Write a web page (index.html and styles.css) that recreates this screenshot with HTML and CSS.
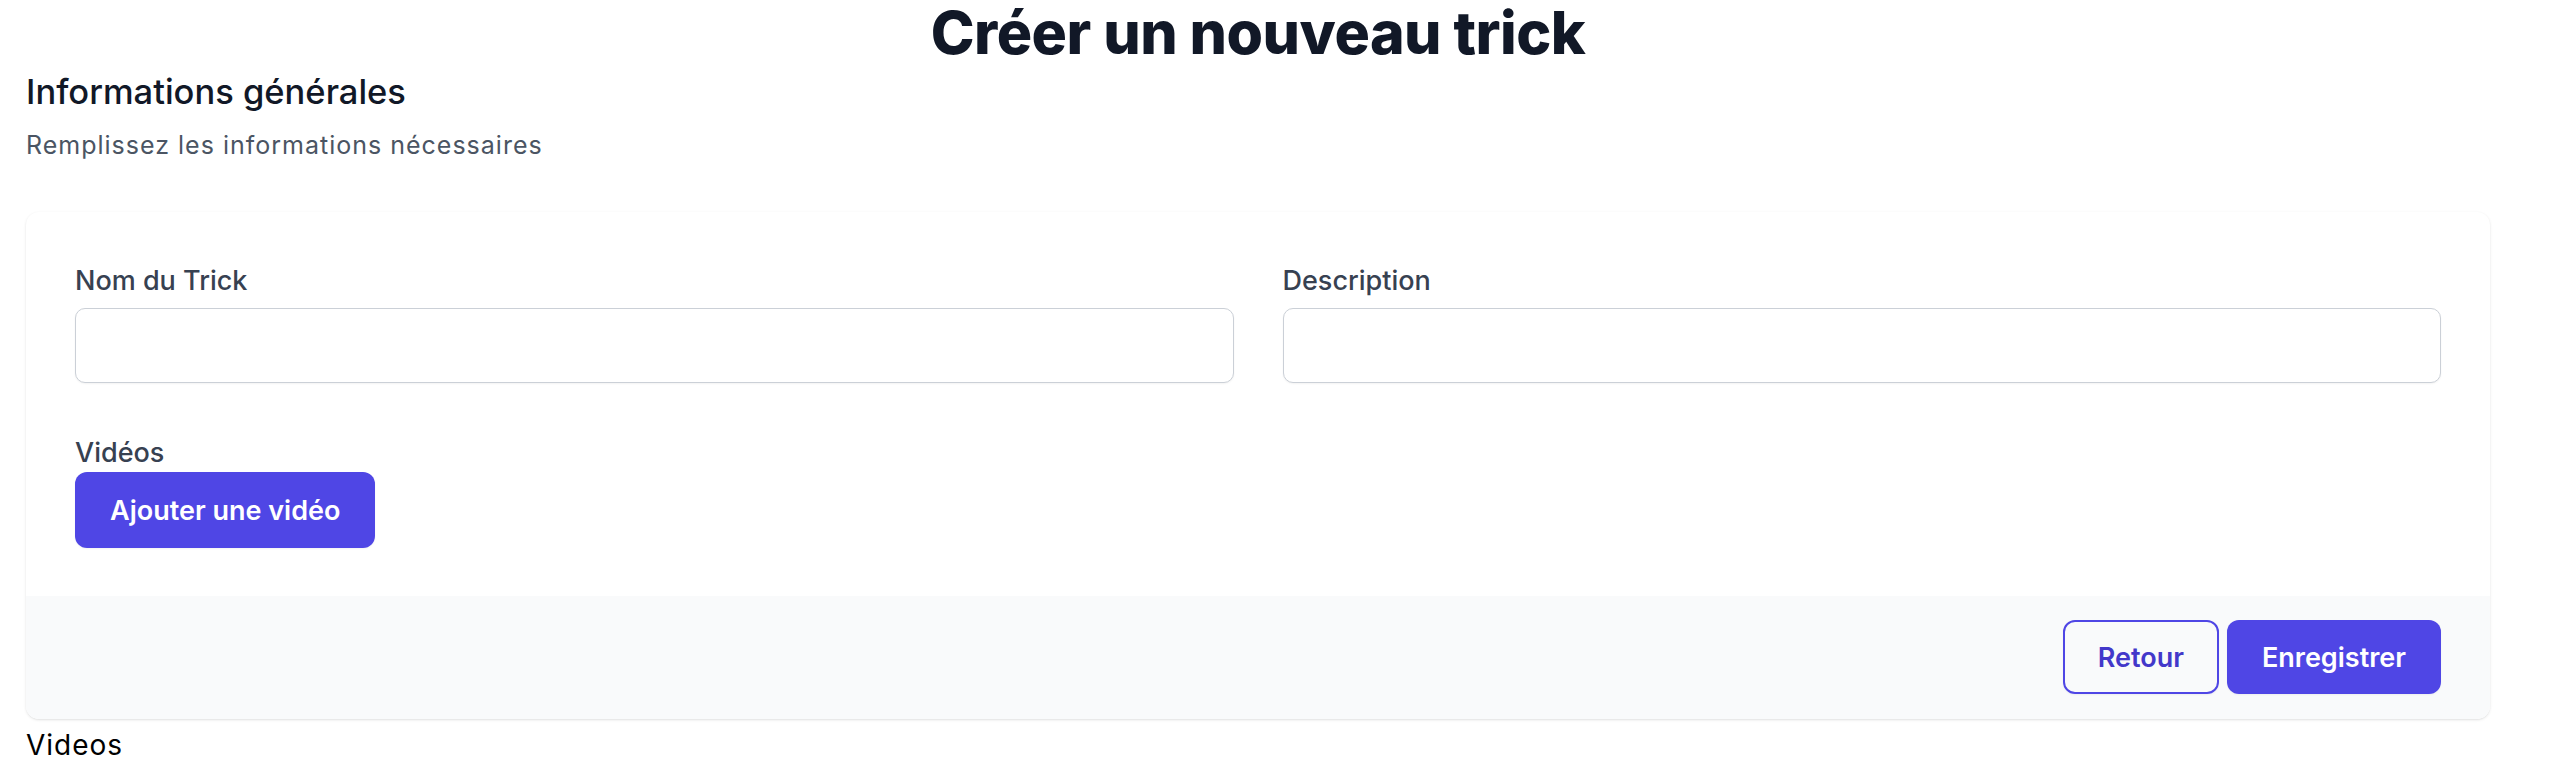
FILE: index.html
```html
<!DOCTYPE html>
<html lang="fr">
<head>
<meta charset="utf-8">
<title>Créer un nouveau trick</title>
<link rel="stylesheet" href="styles.css">
</head>
<body>
<div class="page">
  <h1 class="title">Créer un nouveau trick</h1>
  <h2 class="section-title">Informations générales</h2>
  <p class="section-sub">Remplissez les informations nécessaires</p>
  <form class="card">
    <div class="card-body">
      <div class="grid">
        <div class="field">
          <label class="label" for="name">Nom du Trick</label>
          <input class="input" id="name" type="text">
        </div>
        <div class="field">
          <label class="label" for="desc">Description</label>
          <input class="input" id="desc" type="text">
        </div>
      </div>
      <div class="videos">
        <label class="label">Vidéos</label>
        <button type="button" class="btn btn-primary btn-add">Ajouter une vidéo</button>
      </div>
    </div>
    <div class="card-footer">
      <button type="button" class="btn btn-outline">Retour</button>
      <button type="submit" class="btn btn-primary">Enregistrer</button>
    </div>
  </form>
  <div class="videos-text">Videos</div>
</div>
</body>
</html>
```

FILE: styles.css
```css
html, body {
  margin: 0;
  padding: 0;
  background: #ffffff;
}

body {
  font-family: Inter, "Noto Sans", "Liberation Sans", sans-serif;
}

.page {
  margin-left: 26px;
  width: 2464px;
}

.title {
  margin: 0;
  text-align: center;
  font-size: 59px;
  font-weight: 800;
  line-height: 66px;
  color: #111827;
  letter-spacing: -0.5px;
}

.section-title {
  margin: 3px 0 0;
  font-size: 34.5px;
  font-weight: 500;
  line-height: 46px;
  color: #111827;
}

.section-sub {
  margin: 14px 0 0;
  font-size: 25px;
  letter-spacing: 1px;
  line-height: 33px;
  color: #4b5563;
}

.card {
  margin-top: 50px;
  background: #ffffff;
  border-radius: 13px;
  box-shadow: 0 1px 3px rgba(0, 0, 0, 0.1), 0 1px 2px -1px rgba(0, 0, 0, 0.1);
  overflow: hidden;
}

.card-body {
  padding: 49px 49px 48px;
}

.grid {
  display: grid;
  grid-template-columns: 1fr 1fr;
  column-gap: 49px;
}

.label {
  display: block;
  font-size: 27px;
  font-weight: 500;
  line-height: 39px;
  color: #374151;
}

.input {
  display: block;
  box-sizing: border-box;
  width: 100%;
  height: 75px;
  margin: 8px 0 0;
  border: 1.5px solid #cbd0d7;
  border-radius: 10px;
  background: #ffffff;
  box-shadow: 0 1px 2px rgba(0, 0, 0, 0.05);
  font-family: inherit;
  font-size: 26px;
  padding: 0 18px;
}

.videos {
  margin-top: 50px;
}

.btn {
  display: inline-flex;
  align-items: center;
  justify-content: center;
  box-sizing: border-box;
  height: 74px;
  padding: 0 35px;
  border-radius: 12px;
  font-family: inherit;
  font-size: 27px;
  font-weight: 600;
  line-height: 39px;
  cursor: pointer;
  box-shadow: 0 1px 2px rgba(0, 0, 0, 0.05);
}

.btn-primary {
  background: #4f46e5;
  border: none;
  color: #ffffff;
}

.btn-add {
  height: 76px;
}

.btn-outline {
  background: transparent;
  border: 2px solid #4f46e5;
  color: #4338ca;
  padding: 0 33px;
}

.card-footer {
  display: flex;
  justify-content: flex-end;
  gap: 8px;
  padding: 24px 49px 25px;
  background: #f9fafb;
}

.videos-text {
  margin-top: 7px;
  font-size: 28px;
  letter-spacing: 1px;
  line-height: 39px;
  color: #000000;
}
```
